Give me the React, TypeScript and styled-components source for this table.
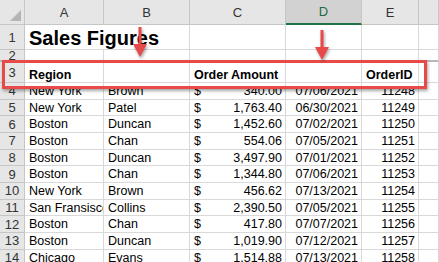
import React from 'react'
import styled, { createGlobalStyle } from 'styled-components'

const GlobalStyle = createGlobalStyle`
  html, body {
    margin: 0;
    padding: 0;
    background: #ffffff;
  }
`

const ROW_H = 16.667

const Page = styled.div`
  position: relative;
  width: 439px;
  height: 262px;
  overflow: hidden;
  background: #ffffff;
  font-family: 'Liberation Sans', Arial, sans-serif;
`

const Sheet = styled.div`
  display: grid;
  grid-template-columns: 25px 79px 86px 96px 76px 57px 1fr;
  grid-template-rows: 25px 25px 12px 21px repeat(11, ${ROW_H}px);
`

const Corner = styled.div`
  position: relative;
  background: #e6e6e6;
  border-right: 1px solid #c6c6c6;
  border-bottom: 1px solid #c6c6c6;
  &::after {
    content: '';
    position: absolute;
    right: 3px;
    bottom: 3px;
    border-style: solid;
    border-width: 0 0 11px 11px;
    border-color: transparent transparent #b4b4b4 transparent;
  }
`

const ColHead = styled.div<{ $active?: boolean }>`
  display: flex;
  align-items: center;
  justify-content: center;
  background: ${({ $active }) => ($active ? '#d2d2d2' : '#e6e6e6')};
  color: ${({ $active }) => ($active ? '#1e6b41' : '#333333')};
  border-right: 1px solid #c6c6c6;
  border-bottom: ${({ $active }) => ($active ? '2px solid #217346' : '1px solid #c6c6c6')};
  font-size: 13px;
  box-sizing: border-box;
`

const RowHead = styled.div<{ $frozen?: boolean }>`
  display: flex;
  align-items: center;
  justify-content: center;
  background: #e6e6e6;
  color: #333333;
  border-right: 1px solid #c6c6c6;
  border-bottom: ${({ $frozen }) => ($frozen ? '2px solid #b8b8b8' : '1px solid #c6c6c6')};
  font-size: 13px;
  line-height: 1;
  box-sizing: border-box;
  overflow: hidden;
`

const Cell = styled.div<{
  $align?: 'left' | 'right' | 'between'
  $bold?: boolean
  $big?: boolean
  $frozen?: boolean
  $span?: number
}>`
  display: flex;
  align-items: flex-end;
  justify-content: ${({ $align }) =>
    $align === 'right' ? 'flex-end' : $align === 'between' ? 'space-between' : 'flex-start'};
  grid-column: span ${({ $span }) => $span ?? 1};
  padding: 0 3px 1px 4px;
  border-right: 1px solid #d9d9d9;
  border-bottom: ${({ $frozen }) => ($frozen ? '2px solid #b8b8b8' : '1px solid #d9d9d9')};
  box-sizing: border-box;
  white-space: nowrap;
  overflow: hidden;
  color: #000000;
  font-size: ${({ $big }) => ($big ? '20px' : '12.5px')};
  font-weight: ${({ $bold }) => ($bold ? 700 : 400)};
  line-height: 1;
`

const Highlight = styled.div`
  position: absolute;
  left: 2px;
  top: 60px;
  width: 425px;
  height: 29px;
  border: 3px solid #e84a4a;
  box-sizing: border-box;
  box-shadow: 1px 2px 3px rgba(0, 0, 0, 0.35);
`

const Arrow = styled.svg<{ $x: number; $y: number }>`
  position: absolute;
  left: ${({ $x }) => $x}px;
  top: ${({ $y }) => $y}px;
  overflow: visible;
  filter: drop-shadow(1px 2px 1.5px rgba(0, 0, 0, 0.35));
`

const ArrowDown = ({ x, y }: { x: number; y: number }) => (
  <Arrow $x={x} $y={y} width="14" height="30" viewBox="0 0 14 30">
    <rect x="5.5" y="0" width="3" height="20" fill="#e84a4a" />
    <polygon points="0,17 14,17 7,30" fill="#e84a4a" />
  </Arrow>
)

const rows = [
  ['New York', 'Brown', '340.00', '07/06/2021', '11248'],
  ['New York', 'Patel', '1,763.40', '06/30/2021', '11249'],
  ['Boston', 'Duncan', '1,452.60', '07/02/2021', '11250'],
  ['Boston', 'Chan', '554.06', '07/05/2021', '11251'],
  ['Boston', 'Duncan', '3,497.90', '07/01/2021', '11252'],
  ['Boston', 'Chan', '1,344.80', '07/06/2021', '11253'],
  ['New York', 'Brown', '456.62', '07/13/2021', '11254'],
  ['San Fransisco', 'Collins', '2,390.50', '07/05/2021', '11255'],
  ['Boston', 'Chan', '417.80', '07/07/2021', '11256'],
  ['Boston', 'Duncan', '1,019.90', '07/12/2021', '11257'],
  ['Chicago', 'Evans', '1,514.88', '07/13/2021', '11258'],
]

const App = () => {
  return (
    <Page>
      <GlobalStyle />
      <Sheet>
        <Corner />
        <ColHead>A</ColHead>
        <ColHead>B</ColHead>
        <ColHead>C</ColHead>
        <ColHead $active>D</ColHead>
        <ColHead>E</ColHead>
        <ColHead />

        <RowHead>1</RowHead>
        <Cell $bold $big $span={2}>Sales Figures</Cell>
        <Cell />
        <Cell />
        <Cell />
        <Cell />

        <RowHead $frozen>2</RowHead>
        <Cell $frozen />
        <Cell $frozen />
        <Cell $frozen />
        <Cell $frozen />
        <Cell $frozen />
        <Cell $frozen />

        <RowHead>3</RowHead>
        <Cell $bold>Region</Cell>
        <Cell />
        <Cell $bold>Order Amount</Cell>
        <Cell />
        <Cell $bold>OrderID</Cell>
        <Cell />

        {rows.map((r, i) => (
          <React.Fragment key={i}>
            <RowHead>{i + 4}</RowHead>
            <Cell>{r[0]}</Cell>
            <Cell>{r[1]}</Cell>
            <Cell $align="between">
              <span>$</span>
              <span>{r[2]}</span>
            </Cell>
            <Cell $align="right">{r[3]}</Cell>
            <Cell $align="right">{r[4]}</Cell>
            <Cell />
          </React.Fragment>
        ))}
      </Sheet>
      <Highlight />
      <ArrowDown x={133} y={27} />
      <ArrowDown x={315} y={30} />
    </Page>
  )
}

export default App
